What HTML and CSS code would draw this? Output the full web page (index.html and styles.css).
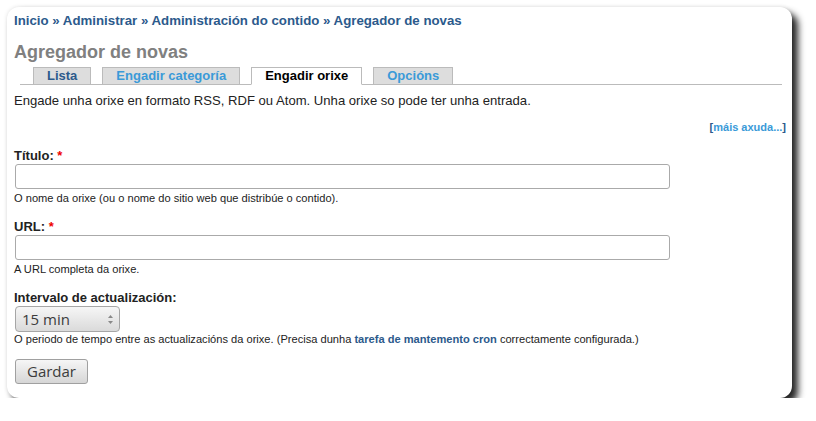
FILE: index.html
```html
<!DOCTYPE html>
<html lang="gl">
<head>
<meta charset="utf-8">
<title>Agregador de novas</title>
<link rel="stylesheet" href="styles.css">
</head>
<body>
<div class="window">
  <div class="breadcrumb"><a href="#">Inicio</a> » <a href="#">Administrar</a> » <a href="#">Administración do contido</a> » <a href="#">Agregador de novas</a></div>
  <h2 class="title">Agregador de novas</h2>
  <ul class="tabs">
    <li class="tab visited"><a href="#">Lista</a></li>
    <li class="tab"><a href="#">Engadir categoría</a></li>
    <li class="tab active"><a href="#">Engadir orixe</a></li>
    <li class="tab"><a href="#">Opcións</a></li>
  </ul>
  <p class="intro">Engade unha orixe en formato RSS, RDF ou Atom. Unha orixe so pode ter unha entrada.</p>
  <div class="more-help">[<a href="#">máis axuda...</a>]</div>
  <form class="form">
    <div class="field">
      <label class="label">Título: <span class="req">*</span></label>
      <input class="text-input" type="text">
      <div class="desc">O nome da orixe (ou o nome do sitio web que distribúe o contido).</div>
    </div>
    <div class="field">
      <label class="label">URL: <span class="req">*</span></label>
      <input class="text-input" type="text">
      <div class="desc">A URL completa da orixe.</div>
    </div>
    <div class="field field-last">
      <label class="label">Intervalo de actualización:</label>
      <div class="select">
        <span class="select-value">15 min</span>
        <svg class="spin" width="7" height="11" viewBox="0 0 7 11"><path d="M3.5 1 L6 4 H1 Z" fill="#888"/><path d="M3.5 10 L6 7 H1 Z" fill="#888"/></svg>
      </div>
      <div class="desc desc-tight">O periodo de tempo entre as actualizacións da orixe. (Precisa dunha <a href="#">tarefa de mantemento cron</a> correctamente configurada.)</div>
    </div>
    <button class="button" type="button">Gardar</button>
  </form>
</div>
</body>
</html>
```
FILE: styles.css
```css
html, body {
  margin: 0;
  padding: 0;
  background: #fff;
}
body {
  font-family: "Liberation Sans", Arial, sans-serif;
  color: #222;
}
a {
  text-decoration: none;
}
.window {
  margin: 7px 0 0 7px;
  width: 785px;
  height: 391px;
  box-sizing: border-box;
  padding: 6px 6px 0 7px;
  background: #fff;
  border-radius: 12px;
  box-shadow: 6px 6px 7px rgba(0, 0, 0, 0.85), 0 0 4px rgba(0, 0, 0, 0.12);
}
.breadcrumb {
  font-size: 13.25px;
  line-height: 16px;
  font-weight: bold;
  color: #2c5a8c;
}
.breadcrumb a {
  color: #2c5a8c;
}
.title {
  margin: 13px 0 0;
  font-size: 18px;
  line-height: 20px;
  font-weight: bold;
  color: #808080;
}
.tabs {
  list-style: none;
  margin: 4px 4px 0 6px;
  padding: 0 0 0 13px;
  display: flex;
  align-items: flex-end;
  border-bottom: 1px solid #bbb;
  height: 18px;
}
.tab {
  margin-right: 11px;
  margin-bottom: -1px;
}
.tab a {
  display: block;
  padding: 0 13px;
  font-size: 13px;
  line-height: 16px;
  font-weight: bold;
  color: #3a9ad8;
  background: #ddd;
  border: 1px solid #bbb;
}
.tab.visited a {
  color: #2c5a8c;
}
.tab.active a {
  background: #fff;
  color: #000;
  border-bottom-color: #fff;
}
.intro {
  margin: 8px 0 0;
  font-size: 13.1px;
  line-height: 16px;
}
.more-help {
  margin-top: 11px;
  text-align: right;
  font-size: 11px;
  line-height: 14px;
  font-weight: bold;
  color: #2c5a8c;
}
.more-help a {
  color: #3a9ad8;
}
.form {
  margin: 14px 0 0;
}
.field {
  margin-bottom: 14px;
}
.field-last {
  margin-bottom: 13px;
}
.label {
  display: block;
  font-size: 13px;
  line-height: 16px;
  font-weight: bold;
  color: #222;
}
.req {
  color: #e00;
}
.text-input {
  display: block;
  box-sizing: border-box;
  margin: 0 0 0 1px;
  width: 655px;
  height: 25px;
  border: 1px solid #aaa;
  border-radius: 3px;
  background: #fff;
  padding: 0 4px;
}
.desc {
  margin-top: 2px;
  font-size: 11.1px;
  line-height: 14px;
  color: #222;
}
.desc-tight {
  margin-top: 0;
}
.desc a {
  color: #2c5a8c;
  font-weight: bold;
}
.select {
  margin: 0 0 0 1px;
  box-sizing: border-box;
  width: 105px;
  height: 26px;
  border: 1px solid #a6a6a6;
  border-radius: 4px;
  background: linear-gradient(#f6f6f6, #dadada);
  display: flex;
  align-items: center;
  justify-content: space-between;
  padding: 0 5px 0 6px;
  font-family: "Open Sans", "Noto Sans", sans-serif;
  font-size: 15px;
  color: #3c3c3c;
}
.spin {
  display: block;
}
.button {
  display: block;
  margin: 0 0 0 1px;
  box-sizing: border-box;
  width: 73px;
  height: 25px;
  padding: 0;
  border: 1px solid #a0a0a0;
  border-radius: 3px;
  background: linear-gradient(#f6f6f6, #d6d6d6);
  font-family: "Open Sans", "Noto Sans", sans-serif;
  font-size: 15px;
  line-height: 23px;
  color: #3c3c3c;
}
```
